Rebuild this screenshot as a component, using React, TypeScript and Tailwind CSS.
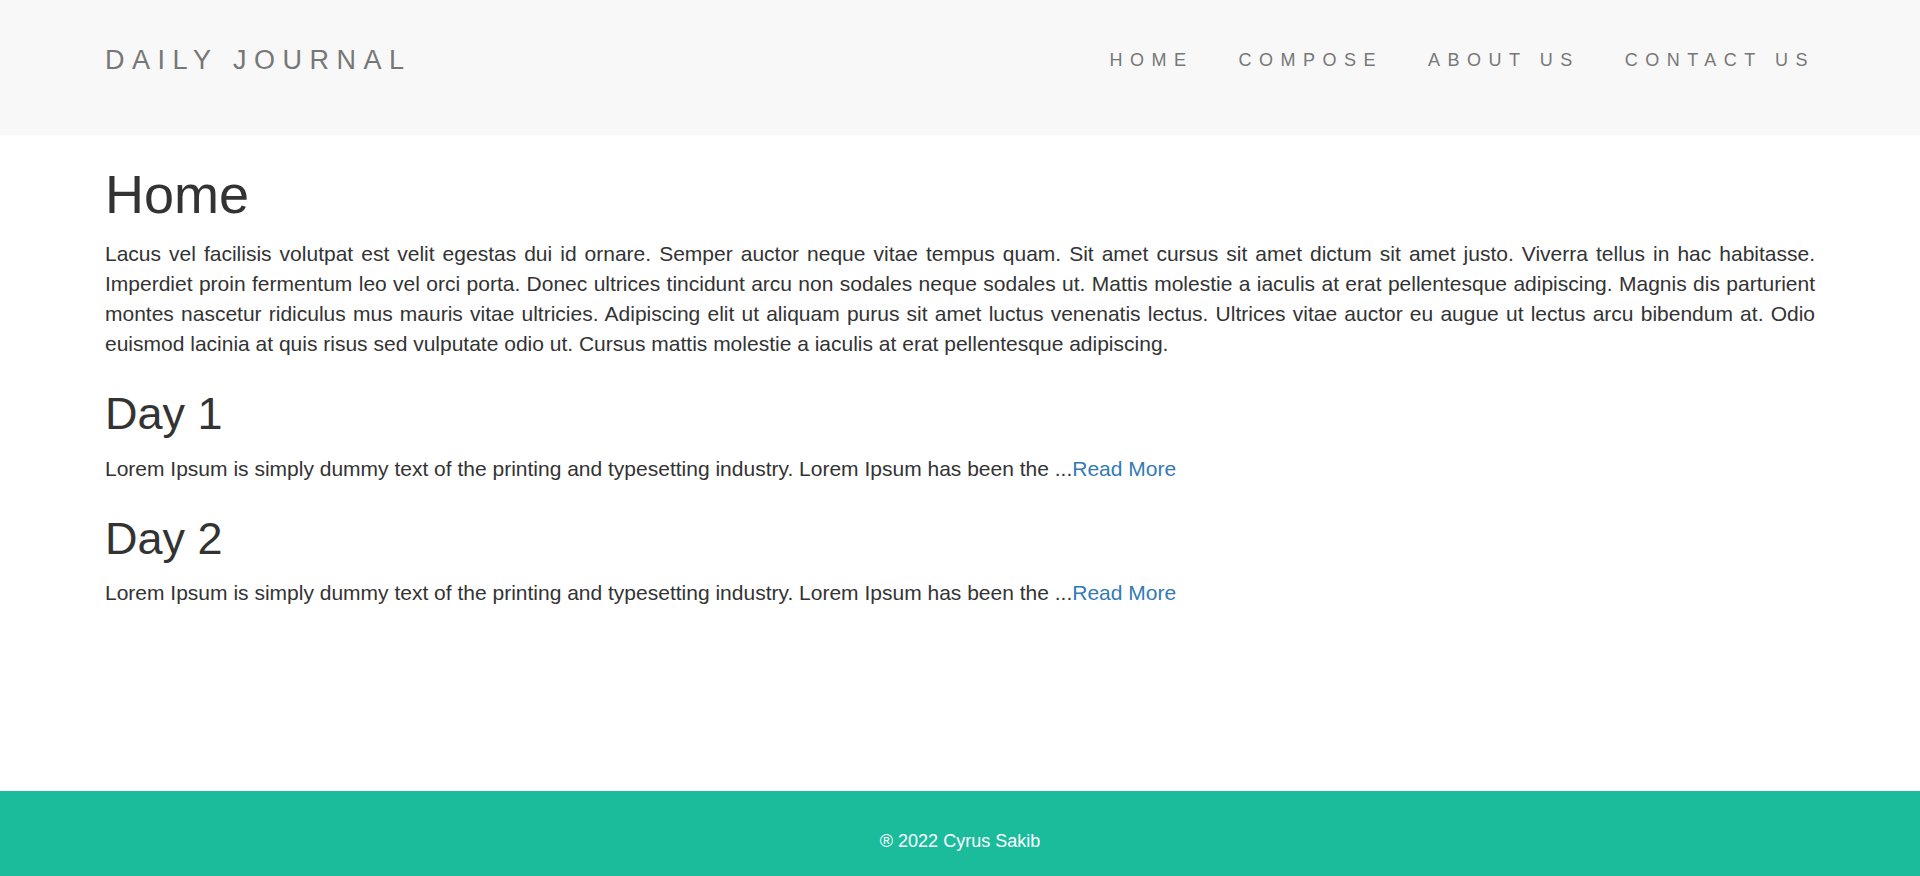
import React from "react";

const posts = [
  {
    title: "Day 1",
    body: "Lorem Ipsum is simply dummy text of the printing and typesetting industry. Lorem Ipsum has been the ...",
  },
  {
    title: "Day 2",
    body: "Lorem Ipsum is simply dummy text of the printing and typesetting industry. Lorem Ipsum has been the ...",
  },
];

export default function App() {
  return (
    <div className="min-h-screen flex flex-col bg-white text-[#333] font-['Liberation_Sans',Arial,sans-serif]">
      <header className="h-[135px] bg-[#f8f8f8] shrink-0">
        <div className="w-[1710px] mx-auto flex justify-between items-start pt-[45px]">
          <a className="block text-[27px] leading-[30px] tracking-[7.5px] text-[#777]">DAILY JOURNAL</a>
          <ul className="flex -mr-[22.5px]">
            {["HOME", "COMPOSE", "ABOUT US", "CONTACT US"].map((l) => (
              <li key={l}>
                <a className="block px-[22.5px] text-[18px] leading-[30px] tracking-[7.5px] text-[#777]">{l}</a>
              </li>
            ))}
          </ul>
        </div>
      </header>

      <main className="w-[1710px] mx-auto flex-1">
        <h1 className="mt-[30px] mb-[15px] text-[54px] leading-[1.1] font-normal">Home</h1>
        <p className="mb-[15px] text-[21px] leading-[30px] text-justify">
          Lacus vel facilisis volutpat est velit egestas dui id ornare. Semper auctor neque vitae tempus quam. Sit amet cursus sit amet dictum sit amet justo. Viverra tellus in hac habitasse. Imperdiet proin fermentum leo vel orci porta. Donec ultrices tincidunt arcu non sodales neque sodales ut. Mattis molestie a iaculis at erat pellentesque adipiscing. Magnis dis parturient montes nascetur ridiculus mus mauris vitae ultricies. Adipiscing elit ut aliquam purus sit amet luctus venenatis lectus. Ultrices vitae auctor eu augue ut lectus arcu bibendum at. Odio euismod lacinia at quis risus sed vulputate odio ut. Cursus mattis molestie a iaculis at erat pellentesque adipiscing.
        </p>
        {posts.map((p) => (
          <div key={p.title}>
            <h2 className="mt-[30px] mb-[15px] text-[45px] leading-[1.1] font-normal">{p.title}</h2>
            <p className="mb-[15px] text-[21px] leading-[30px]">
              {p.body}
              <a className="text-[#337ab7]">Read More</a>
            </p>
          </div>
        ))}
      </main>

      <footer className="h-[85px] bg-[#1abc9c] shrink-0 text-center">
        <p className="pt-[35px] text-[18px] leading-[30px] text-white">® 2022 Cyrus Sakib</p>
      </footer>
    </div>
  );
}
